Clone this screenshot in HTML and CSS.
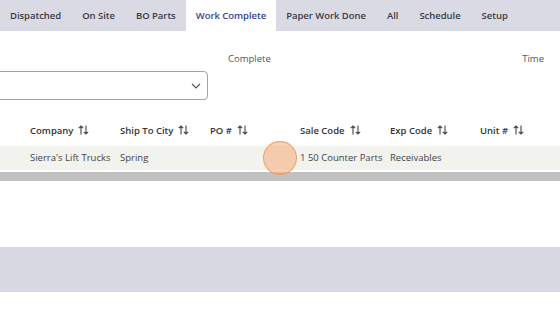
FILE: index.html
```html
<!DOCTYPE html>
<html>
<head>
<meta charset="utf-8">
<link rel="stylesheet" href="styles.css">
</head>
<body>
<nav class="tabs">
  <a class="tab">Dispatched</a>
  <a class="tab">On Site</a>
  <a class="tab">BO Parts</a>
  <a class="tab active">Work Complete</a>
  <a class="tab">Paper Work Done</a>
  <a class="tab">All</a>
  <a class="tab">Schedule</a>
  <a class="tab">Setup</a>
</nav>
<section class="filters">
  <div class="field main">
    <div class="label">&nbsp;</div>
    <div class="select">
      <svg class="chev" width="10" height="6" viewBox="0 0 10 6"><path d="M1 1 L5 5 L9 1" fill="none" stroke="#555" stroke-width="1.2"/></svg>
    </div>
  </div>
  <div class="field complete"><div class="label">Complete</div></div>
  <div class="field time"><div class="label">Time</div></div>
</section>
<section class="table">
  <div class="row head">
    <div class="cell">Company <svg class="sort" width="11" height="10" viewBox="0 0 11 10"><path d="M3 9.5 V1 M0.8 3.2 L3 1 L5.2 3.2 M8 0.5 V9 M5.8 6.8 L8 9 L10.2 6.8" fill="none" stroke="#444" stroke-width="1.1"/></svg></div>
    <div class="cell">Ship To City <svg class="sort" width="11" height="10" viewBox="0 0 11 10"><path d="M3 9.5 V1 M0.8 3.2 L3 1 L5.2 3.2 M8 0.5 V9 M5.8 6.8 L8 9 L10.2 6.8" fill="none" stroke="#444" stroke-width="1.1"/></svg></div>
    <div class="cell">PO # <svg class="sort" width="11" height="10" viewBox="0 0 11 10"><path d="M3 9.5 V1 M0.8 3.2 L3 1 L5.2 3.2 M8 0.5 V9 M5.8 6.8 L8 9 L10.2 6.8" fill="none" stroke="#444" stroke-width="1.1"/></svg></div>
    <div class="cell">Sale Code <svg class="sort" width="11" height="10" viewBox="0 0 11 10"><path d="M3 9.5 V1 M0.8 3.2 L3 1 L5.2 3.2 M8 0.5 V9 M5.8 6.8 L8 9 L10.2 6.8" fill="none" stroke="#444" stroke-width="1.1"/></svg></div>
    <div class="cell">Exp Code <svg class="sort" width="11" height="10" viewBox="0 0 11 10"><path d="M3 9.5 V1 M0.8 3.2 L3 1 L5.2 3.2 M8 0.5 V9 M5.8 6.8 L8 9 L10.2 6.8" fill="none" stroke="#444" stroke-width="1.1"/></svg></div>
    <div class="cell">Unit # <svg class="sort" width="11" height="10" viewBox="0 0 11 10"><path d="M3 9.5 V1 M0.8 3.2 L3 1 L5.2 3.2 M8 0.5 V9 M5.8 6.8 L8 9 L10.2 6.8" fill="none" stroke="#444" stroke-width="1.1"/></svg></div>
  </div>
  <div class="row data">
    <div class="cell">Sierra's Lift Trucks</div>
    <div class="cell">Spring</div>
    <div class="cell"></div>
    <div class="cell">1 50 Counter Parts</div>
    <div class="cell">Receivables</div>
    <div class="cell"></div>
    <span class="touch"></span>
  </div>
  <div class="scrollbar"></div>
</section>
<div class="spacer"></div>
<div class="band"></div>
</body>
</html>
```
FILE: styles.css
```css
html, body {
  margin: 0;
  padding: 0;
  background: #ffffff;
  font-family: "Open Sans", "Noto Sans", sans-serif;
  overflow: hidden;
  width: 560px;
  height: 315px;
}
.tabs {
  display: flex;
  height: 31px;
  background: #dadae5;
}
.tab {
  display: flex;
  align-items: center;
  padding: 0 10.5px;
  font-size: 9.5px;
  font-weight: 600;
  color: #3a3a44;
  letter-spacing: -0.04px;
}
.tab:first-child { padding-left: 10px; }
.tab.active {
  background: #ffffff;
  color: #3b4196;
  padding: 0 9.5px 0 9.5px;
  margin-left: 0;
}
.filters {
  display: flex;
  padding-top: 21px;
  height: 84px;
  box-sizing: border-box;
}
.field .label {
  font-size: 9.5px;
  color: #555;
  height: 14px;
  line-height: 14px;
}
.field.main {
  width: 220px;
  margin-left: -12px;
}
.select {
  margin-top: 5px;
  height: 27px;
  border: 1px solid #a3a3a3;
  border-radius: 4px;
  display: flex;
  align-items: center;
  justify-content: flex-end;
  padding-right: 6px;
}
.field.complete { margin-left: 20px; }
.field.time { margin-left: auto; margin-right: 16px; }
.table {
  display: flex;
  flex-direction: column;
}
.row {
  display: flex;
  padding-left: 30px;
  position: relative;
}
.cell {
  width: 90px;
  flex: none;
  font-size: 9.5px;
  white-space: nowrap;
  display: flex;
  align-items: center;
}
.head {
  height: 30px;
  align-items: center;
  padding-bottom: 1px;
}
.head .cell {
  font-weight: 600;
  color: #333;
}
.sort { margin-left: 5px; }
.data {
  height: 24px;
  background: #f2f2ef;
  color: #444;
  align-items: center;
}
.data .cell { padding-bottom: 1px; }
.touch {
  position: absolute;
  left: 263px;
  top: -5px;
  width: 32px;
  height: 32px;
  border-radius: 50%;
  background: rgba(246, 172, 116, 0.55);
  border: 1px solid rgba(240, 150, 80, 0.85);
}
.scrollbar {
  height: 9px;
  background: #c1c1c1;
  margin-top: 2px;
}
.spacer { height: 66px; }
.band {
  height: 45px;
  background: #d9d9e4;
}
```
